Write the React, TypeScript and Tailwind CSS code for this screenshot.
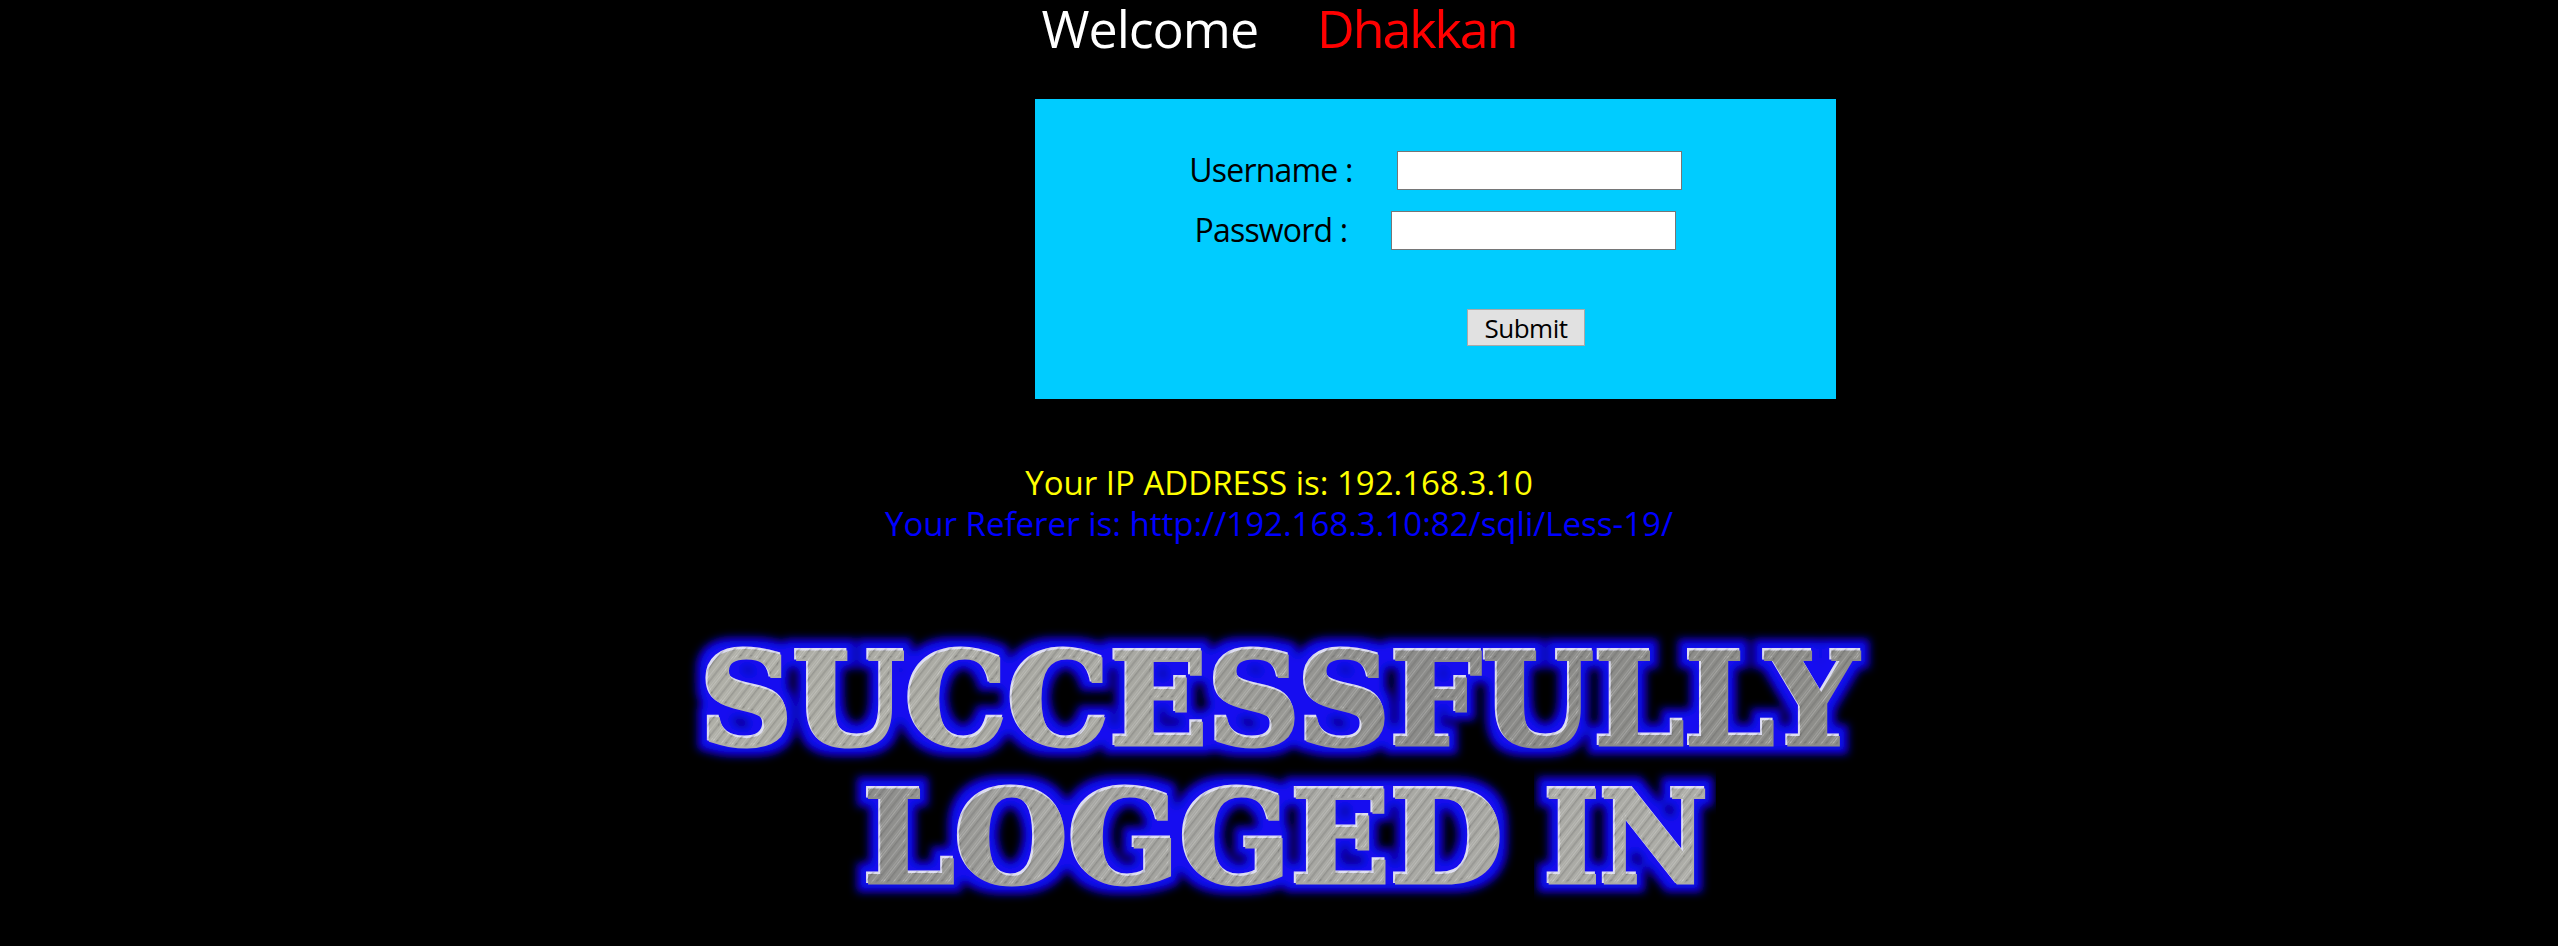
const font = "[font-family:'Open_Sans',sans-serif]";

const words = [
  { id: "w-successfully", text: "SUCCESSFULLY", x: 20, y: 125, length: 1158 },
  { id: "w-logged", text: "LOGGED", x: 183, y: 263, length: 640 },
  { id: "w-in", text: "IN", x: 864, y: 263, length: 164 },
];

const LoginBanner = () => (
  <svg width="1200" height="290" viewBox="0 0 1200 290" role="img" aria-label="Successfully logged in">
    <defs>
      <linearGradient id="metal" gradientUnits="userSpaceOnUse" x1="0" y1="0" x2="1200" y2="0">
        <stop offset="0" stopColor="#b0b0a8" />
        <stop offset="0.4" stopColor="#a8a8a2" />
        <stop offset="0.6" stopColor="#8c8c8a" />
        <stop offset="1" stopColor="#8e8e8a" />
      </linearGradient>
      <linearGradient id="metal-low" gradientUnits="userSpaceOnUse" x1="0" y1="0" x2="1200" y2="0">
        <stop offset="0.15" stopColor="#8c8c8a" />
        <stop offset="0.3" stopColor="#a4a4a0" />
        <stop offset="1" stopColor="#b0b0aa" />
      </linearGradient>
      <pattern id="scratches" patternUnits="userSpaceOnUse" width="17" height="17" patternTransform="rotate(38)">
        <rect x="0" y="0" width="1" height="17" fill="#ffffff" fillOpacity="0.2" />
        <rect x="3" y="0" width="1.5" height="17" fill="#444444" fillOpacity="0.22" />
        <rect x="8" y="0" width="1" height="17" fill="#ffffff" fillOpacity="0.16" />
        <rect x="11" y="0" width="2" height="17" fill="#555555" fillOpacity="0.18" />
        <rect x="15" y="0" width="1" height="17" fill="#ffffff" fillOpacity="0.14" />
      </pattern>
      <filter id="glow" x="-5%" y="-30%" width="110%" height="160%">
        <feMorphology in="SourceAlpha" operator="dilate" radius="9" result="fat" />
        <feGaussianBlur in="fat" stdDeviation="4.5" result="soft" />
        <feFlood floodColor="#1208f0" />
        <feComposite in2="soft" operator="in" />
      </filter>
    </defs>

    {words.map((word) => (
      <g key={word.id}>
        <use href={`#${word.id}`} filter="url(#glow)" fill="#000" stroke="#000" strokeWidth="4" />
        <use href={`#${word.id}`} fill="#dcdcf0" stroke="#dcdcf0" strokeWidth="4" />
        <use
          href={`#${word.id}`}
          x="1.5"
          y="1.5"
          fill={word.id === "w-successfully" ? "url(#metal)" : "url(#metal-low)"}
          stroke={word.id === "w-successfully" ? "url(#metal)" : "url(#metal-low)"}
          strokeWidth="3"
        />
        <g fill="url(#scratches)" stroke="url(#scratches)" strokeWidth="3">
          <text
            id={word.id}
            x={word.x}
            y={word.y}
            textLength={word.length}
            lengthAdjust="spacingAndGlyphs"
            fontFamily="'DejaVu Serif', serif"
            fontWeight={700}
            fontSize={127}
          >
            {word.text}
          </text>
        </g>
      </g>
    ))}
  </svg>
);

const Field = ({ label, type }: { label: string; type: string }) => (
  <div className="flex items-center justify-center gap-[44px]">
    <label className="pb-[2px] text-[32px] leading-[37px] text-black tracking-[-0.025em]">{label}</label>
    <input
      type={type}
      className="w-[285px] h-[39px] bg-white border border-[#767676] rounded-none"
    />
  </div>
);

export default function App() {
  return (
    <div className={`h-[946px] overflow-hidden bg-black flex flex-col ${font}`}>
      <div className="h-[56px] flex items-center justify-center gap-[59px] text-[52px] leading-[56px] tracking-[-0.02em]">
        <span className="text-white">Welcome</span>
        <span className="text-[#ff0000] tracking-[-0.04em]">Dhakkan</span>
      </div>

      <form className="mt-[43px] ml-[1035px] w-[801px] h-[300px] bg-[#00ccff] flex flex-col pt-[52px]">
        <div className="flex flex-col gap-[21px]">
          <Field label="Username :" type="text" />
          <Field label="Password :" type="password" />
        </div>
        <button
          type="button"
          className="mt-[59px] ml-[432px] w-[118px] h-[37px] bg-[#e1e1e1] border border-[#a9a9a9] text-[26px] leading-none text-black tracking-[-0.02em]"
        >
          Submit
        </button>
      </form>

      <div className="mt-[63px] flex flex-col items-center text-[33px] leading-[41px]">
        <span className="text-[#ffff00]">Your IP ADDRESS is: 192.168.3.10</span>
        <span className="text-[#0000ff]">Your Referer is: http://192.168.3.10:82/sqli/Less-19/</span>
      </div>

      <div className="mt-[74px] flex justify-center">
        <LoginBanner />
      </div>
    </div>
  );
}
